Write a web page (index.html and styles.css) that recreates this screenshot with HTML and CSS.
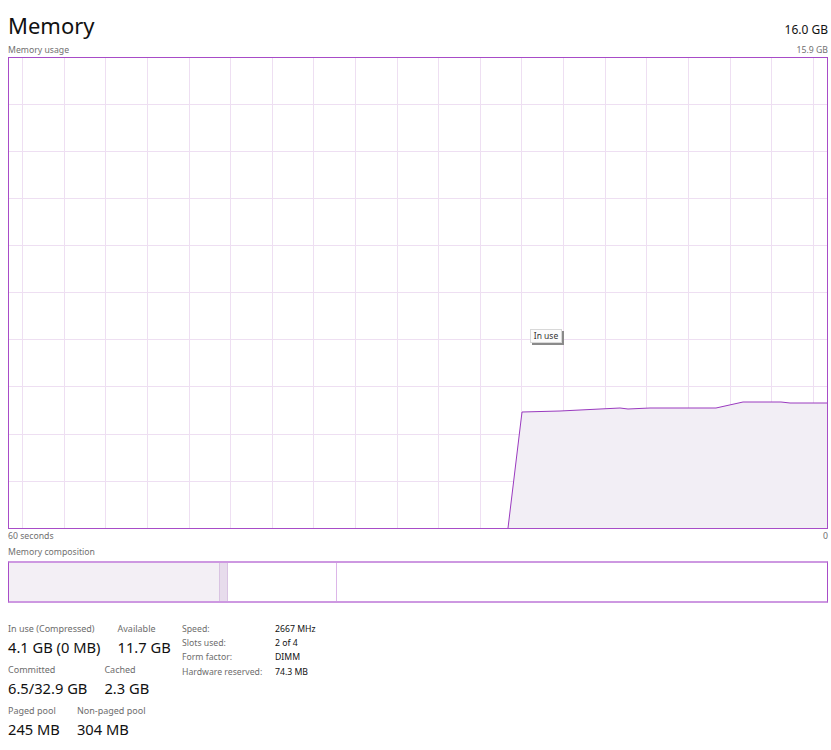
FILE: index.html
```html
<!DOCTYPE html>
<html lang="en">
<head>
  <meta charset="UTF-8">
  <meta name="viewport" content="width=device-width, initial-scale=1.0">
  <title>Memory</title>
  <link rel="stylesheet" href="styles.css">
</head>
<body>
  <div class="page">
    <header class="title-row">
      <h1 class="title">Memory</h1>
      <span class="total">16.0 GB</span>
    </header>

    <div class="caption-row usage-row">
      <span>Memory usage</span>
      <span>15.9 GB</span>
    </div>

    <div class="graph">
      <svg class="graph-svg" width="818" height="470" viewBox="0 0 818 470">
        <!-- grid -->
        <path class="grid" d="M13.5,0V470 M55.5,0V470 M96.5,0V470 M138.5,0V470 M180.5,0V470 M221.5,0V470 M263.5,0V470 M304.5,0V470 M346.5,0V470 M388.5,0V470 M429.5,0V470 M471.5,0V470 M512.5,0V470 M554.5,0V470 M596.5,0V470 M637.5,0V470 M679.5,0V470 M721.5,0V470 M762.5,0V470 M804.5,0V470"/>
        <path class="grid" d="M0,46.5H818 M0,93.5H818 M0,140.5H818 M0,187.5H818 M0,234.5H818 M0,281.5H818 M0,328.5H818 M0,376.5H818 M0,423.5H818"/>
        <!-- usage -->
        <path class="area" d="M499,470 L513,354 L551,353 L591,351 L611,350 L619,351 L641,350 L707,350 L734,344 L772,344 L781,345 L818,345 L818,470 Z"/>
        <path class="line" d="M499,470 L513,354 L551,353 L591,351 L611,350 L619,351 L641,350 L707,350 L734,344 L772,344 L781,345 L818,345"/>
      </svg>
      <div class="tooltip">In use</div>
    </div>

    <div class="caption-row axis-row">
      <span>60 seconds</span>
      <span>0</span>
    </div>

    <div class="caption-row section-row">
      <span>Memory composition</span>
    </div>

    <div class="composition">
      <div class="seg seg-inuse" style="width: 210px"></div>
      <div class="seg seg-modified" style="width: 9px"></div>
      <div class="seg seg-standby" style="width: 109px"></div>
      <div class="seg seg-free"></div>
    </div>

    <div class="stats">
      <div class="stats-main">
        <div class="stat-row">
          <div class="stat">
            <div class="stat-label">In use (Compressed)</div>
            <div class="stat-value">4.1 GB (0 MB)</div>
          </div>
          <div class="stat">
            <div class="stat-label">Available</div>
            <div class="stat-value">11.7 GB</div>
          </div>
        </div>
        <div class="stat-row">
          <div class="stat">
            <div class="stat-label">Committed</div>
            <div class="stat-value">6.5/32.9 GB</div>
          </div>
          <div class="stat">
            <div class="stat-label">Cached</div>
            <div class="stat-value">2.3 GB</div>
          </div>
        </div>
        <div class="stat-row">
          <div class="stat">
            <div class="stat-label">Paged pool</div>
            <div class="stat-value">245 MB</div>
          </div>
          <div class="stat">
            <div class="stat-label">Non-paged pool</div>
            <div class="stat-value">304 MB</div>
          </div>
        </div>
      </div>

      <dl class="stats-hw">
        <dt>Speed:</dt><dd>2667 MHz</dd>
        <dt>Slots used:</dt><dd>2 of 4</dd>
        <dt>Form factor:</dt><dd>DIMM</dd>
        <dt>Hardware reserved:</dt><dd>74.3 MB</dd>
      </dl>
    </div>
  </div>
</body>
</html>
```

FILE: styles.css
```css
body {
  margin: 0;
  background-color: #ffffff;
  font-family: 'Noto Sans', 'Open Sans', sans-serif;
  color: #000000;
}
.page {
  width: 820px;
  padding: 11px 3px 0 8px;
}
.title-row {
  display: flex;
  justify-content: space-between;
  align-items: baseline;
  height: 28px;
}
.title {
  margin: 0;
  font-size: 22px;
  font-weight: 400;
  line-height: 28px;
  color: #111111;
}
.total {
  font-size: 12px;
  line-height: 28px;
  color: #111111;
}
.caption-row {
  display: flex;
  justify-content: space-between;
  margin-top: 3px;
  font-size: 8.7px;
  line-height: 12px;
  color: #707070;
}
.usage-row {
  margin-top: 5px;
}
.axis-row {
  margin-top: 1px;
}
.section-row {
  margin-top: 4px;
}
.graph {
  position: relative;
  margin-top: 1px;
  width: 820px;
  height: 472px;
  box-sizing: border-box;
  border: 1px solid #a84cc8;
}
.graph-svg {
  display: block;
}
.grid {
  stroke: #eedff2;
  stroke-width: 1;
  fill: none;
}
.area {
  fill: #f2eef5;
}
.line {
  fill: none;
  stroke: #9a3abf;
  stroke-width: 1;
}
.tooltip {
  position: absolute;
  left: 521px;
  top: 271px;
  width: 32px;
  height: 14px;
  box-sizing: border-box;
  border: 1px solid #d8d8d8;
  background-color: #fbfbfb;
  box-shadow: 2px 2px 0 #8a8a8a;
  font-size: 8.5px;
  line-height: 12px;
  text-align: center;
  color: #333333;
}
.composition {
  display: flex;
  margin-top: 3px;
  width: 820px;
  height: 42px;
  box-sizing: border-box;
  border-top: 2px solid #cd98e1;
  border-bottom: 2px solid #cd98e1;
  border-left: 1px solid #a84cc8;
  border-right: 1px solid #a84cc8;
}
.seg {
  box-sizing: border-box;
  flex-shrink: 0;
}
.seg-inuse {
  background-color: #f3eff5;
}
.seg-modified {
  background-color: #e7dcec;
  border-left: 1px solid #d9c3e2;
  border-right: 1px solid #d9c3e2;
}
.seg-standby {
  border-right: 1px solid #dcb6e8;
}
.seg-free {
  flex: 1;
}
.stats {
  display: flex;
  align-items: flex-start;
  margin-top: 19px;
}
.stats-main {
  width: 174px;
  padding-top: 1px;
}
.stat-row {
  display: flex;
  gap: 17px;
  margin-bottom: 7px;
}
.stat-label {
  font-size: 9px;
  line-height: 12px;
  color: #6d6d6d;
  white-space: nowrap;
}
.stat-value {
  margin-top: 2px;
  font-size: 14.7px;
  line-height: 20px;
  color: #111111;
  white-space: nowrap;
}
.stats-hw {
  display: grid;
  grid-template-columns: 93px auto;
  align-content: start;
  margin: 0;
  font-size: 8.7px;
  line-height: 14.2px;
}
.stats-hw dt {
  color: #6d6d6d;
  white-space: nowrap;
}
.stats-hw dd {
  margin: 0;
  color: #111111;
  white-space: nowrap;
}
```
